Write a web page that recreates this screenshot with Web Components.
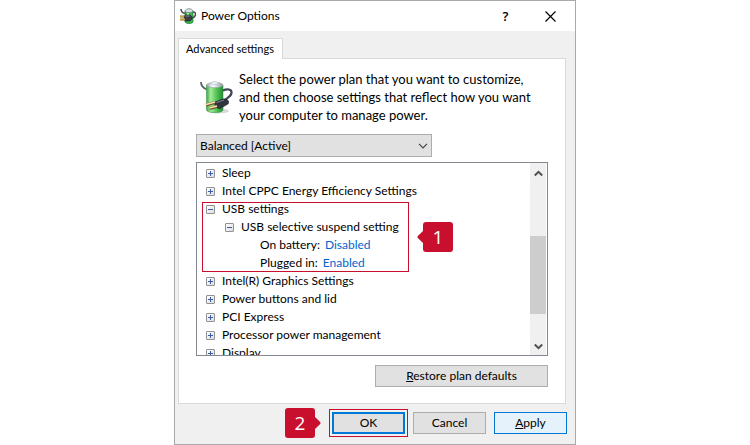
<!DOCTYPE html>
<html lang="en">
<head>
<meta charset="utf-8">
<title>Power Options</title>
<style>
    body {
        margin: 0;
        background-color: #FFF;
        color: #000;
        font: 12px/18px Lato, "Open Sans", sans-serif;
    }
</style>
</head>
<body>
<power-dialog></power-dialog>

<script>
// Battery with a plug
let BatteryIconTemplate = document.createElement("template");
BatteryIconTemplate.innerHTML = `
    <style>
        :host {
            display: block;
            flex: none;
            width: 34px;
            height: 36px;
        }

        svg {
            display: block;
            width: 100%;
            height: 100%;
        }
    </style>

    <svg viewBox="0 0 34 36" aria-hidden="true">
        <defs>
            <linearGradient id="body">
                <stop offset="0" stop-color="#3FA548"/>
                <stop offset=".25" stop-color="#A5EB9B"/>
                <stop offset=".55" stop-color="#5CCB5C"/>
                <stop offset="1" stop-color="#238C33"/>
            </linearGradient>
            <linearGradient id="cap">
                <stop offset="0" stop-color="#9BA5AC"/>
                <stop offset=".4" stop-color="#FFF"/>
                <stop offset="1" stop-color="#8B959B"/>
            </linearGradient>
        </defs>
        <ellipse cx="20" cy="32" rx="10" ry="2.500" fill="#000" opacity=".15"/>
        <path d="M2 3 C2 7 4 9 8 10.500" fill="none" stroke="#59616D" stroke-width="1.800"/>
        <path d="M7.500 6 V31 C8 34.500 23.500 34.500 24 31 V6 Z" fill="url(#body)" stroke="#3C9A48" stroke-width=".6"/>
        <path d="M7.500 6 C8 2.500 23.500 2.500 24 6 C23.500 9.500 8 9.500 7.500 6 Z" fill="url(#cap)" stroke="#98A2A8" stroke-width=".6"/>
        <path d="M12.500 4.500 C12.500 2 19 2 19 4.500 C19 6 12.500 6 12.500 4.500 Z" fill="#EDF3F8" stroke="#A5B0BA" stroke-width=".6"/>
        <path d="M24 11.500 C28 9.500 33 10 32.500 14 C32 18 27 19 25 22" fill="none" stroke="#3F4657" stroke-width="2.200"/>
        <path d="M16 23 L24 20 C28 19.500 31 22 29 25 L21 29.500 C17 30 15 26 16 23 Z" fill="#30343F" stroke="#1B1E28" stroke-width=".6"/>
        <path d="M17.500 23.500 L25 21" stroke="#7C8292" stroke-width="1"/>
        <path d="M7 26 L16 23.500 M10.500 29.500 L18 27.500" stroke="#74512C" stroke-width="3"/>
        <path d="M7 25.500 L16 23 M10.500 29 L18 27" stroke="#F6E2B2" stroke-width="1.600"/>
    </svg>`;

class BatteryIcon extends HTMLElement {
    constructor() {
        super();
        this.attachShadow({mode: "open"});
        this.shadowRoot.appendChild(BatteryIconTemplate.content.cloneNode(true));
    }
}
customElements.define("battery-icon", BatteryIcon);

// Small version for the title bar
let PlugIconTemplate = document.createElement("template");
PlugIconTemplate.innerHTML = `
    <style>
        :host {
            display: block;
            flex: none;
            width: 16px;
            height: 16px;
        }

        svg {
            display: block;
        }
    </style>

    <svg width="16" height="16" viewBox="0 0 16 16" aria-hidden="true">
        <path d="M5 3 V14 C6 16 12 16 13 14 V3 Z" fill="#38B648" stroke="#1E7D30" stroke-width=".7"/>
        <path d="M7 5 V10 H9 V5 Z" fill="#A9F0A4"/>
        <path d="M5 3 C6 0 12 0 13 3 C12 5 6 5 5 3 Z" fill="#DCE2E5" stroke="#777F84" stroke-width=".8"/>
        <path d="M1 1 C1 4 3 5 5 5.500 M13 4 C17 4 16 9 12 10" fill="none" stroke="#444B55" stroke-width="1.500"/>
        <path d="M5 7 L10 7 L12 9 V11 L10 13 H5 L4 10 Z" fill="#3A3D45" stroke="#1D1F25" stroke-width=".6"/>
        <path d="M5.500 8 H9.500" stroke="#8A8F99"/>
        <path d="M0 8.500 H4 M0 11.500 H5" stroke="#8A6A20" stroke-width="2"/>
        <path d="M0 8.200 H4 M0 11.200 H5" stroke="#E5C04B" stroke-width="1"/>
    </svg>`;

class PlugIcon extends HTMLElement {
    constructor() {
        super();
        this.attachShadow({mode: "open"});
        this.shadowRoot.appendChild(PlugIconTemplate.content.cloneNode(true));
    }
}
customElements.define("plug-icon", PlugIcon);

// Title Bar
let TitleBarTemplate = document.createElement("template");
TitleBarTemplate.innerHTML = `
    <style>
        :host {
            display: flex;
            align-items: center;
            height: 30px;
            padding: 0 2px 0 5px;
            background-color: #FFF;
        }

        h1 {
            flex: 1;
            margin: 0 0 0 5px;
            font-size: 12px;
            font-weight: normal;
        }

        button {
            width: 45px;
            height: 28px;
            padding: 0;
            border: none;
            background: none;
            font: 600 13px/18px "Open Sans", sans-serif;
            color: #000;
        }

        svg {
            display: block;
            margin: auto;
        }
    </style>

    <plug-icon></plug-icon>
    <h1><slot></slot></h1>
    <button type="button" aria-label="Help">?</button>
    <button type="button" aria-label="Close">
        <svg width="11" height="11" viewBox="0 0 11 11" aria-hidden="true">
            <path d="M.5 .5 L10.500 10.500 M10.500 .5 L.5 10.500" stroke="#000" stroke-width="1.200"/>
        </svg>
    </button>`;

class TitleBar extends HTMLElement {
    constructor() {
        super();
        this.attachShadow({mode: "open"});
        this.shadowRoot.appendChild(TitleBarTemplate.content.cloneNode(true));
    }
}
customElements.define("title-bar", TitleBar);

// Push buttons: kind is "default", "hot" or nothing
let PushButtonTemplate = document.createElement("template");
PushButtonTemplate.innerHTML = `
    <style>
        :host {
            display: block;
            min-width: 73px;
        }

        button {
            display: block;
            box-sizing: border-box;
            width: 100%;
            height: 22px;
            padding: 0;
            border: 1px solid #ADADAD;
            background-color: #E1E1E1;
            font: inherit;
            color: inherit;
        }

        :host([kind="default"]) button {
            border: 2px solid #0078D7;
        }

        :host([kind="hot"]) button {
            border-color: #0078D7;
            background-color: #E5F1FB;
        }
    </style>

    <button type="button"><slot></slot></button>`;

class PushButton extends HTMLElement {
    constructor() {
        super();
        this.attachShadow({mode: "open"});
        this.shadowRoot.appendChild(PushButtonTemplate.content.cloneNode(true));
    }
}
customElements.define("push-button", PushButton);

// Plan drop-down
let PlanSelectTemplate = document.createElement("template");
PlanSelectTemplate.innerHTML = `
    <style>
        :host {
            display: block;
            position: relative;
            max-width: 236px;
        }

        select {
            display: block;
            box-sizing: border-box;
            width: 100%;
            height: 23px;
            padding: 0 20px 0 3px;
            border: 1px solid #ADADAD;
            border-radius: 0;
            background-color: #E1E1E1;
            -webkit-appearance: none;
                    appearance: none;
            font: inherit;
            color: inherit;
        }

        svg {
            position: absolute;
            top: 9px;
            right: 4px;
            pointer-events: none;
        }
    </style>

    <select aria-label="Power plan">
        <option></option>
    </select>
    <svg width="10" height="6" viewBox="0 0 10 6" aria-hidden="true">
        <path d="M1 .8 L5 4.800 L9 .8" fill="none" stroke="#444" stroke-width="1.200"/>
    </svg>`;

class PlanSelect extends HTMLElement {
    constructor() {
        super();
        this.attachShadow({mode: "open"});
        this.shadowRoot.appendChild(PlanSelectTemplate.content.cloneNode(true));
        this.shadowRoot.querySelector("option").textContent = this.getAttribute("value");
    }
}
customElements.define("plan-select", PlanSelect);

// One tree row, its children go in the default slot
let TreeItemTemplate = document.createElement("template");
TreeItemTemplate.innerHTML = `
    <style>
        :host {
            display: block;
            position: relative;
        }

        .row {
            display: flex;
            align-items: center;
            gap: 7px;
            height: 18px;
            white-space: nowrap;
        }

        button {
            box-sizing: border-box;
            flex: none;
            width: 9px;
            height: 9px;
            margin-top: 1px;
            padding: 0;
            border: 1px solid #919191;
            border-radius: 1px;
            background:
                linear-gradient(#3B5AA8, #3B5AA8) center / 5px 1px no-repeat,
                linear-gradient(#3B5AA8, #3B5AA8) center / 1px 5px no-repeat,
                linear-gradient(135deg, #FFF, #DDD);
        }

        :host([open]) button {
            background:
                linear-gradient(#3B5AA8, #3B5AA8) center / 5px 1px no-repeat,
                linear-gradient(135deg, #FFF, #DDD);
        }

        .children {
            padding-left: 19px;
        }

        ::slotted(callout-frame) {
            position: absolute;
            inset: 2px auto 0 -4px;
        }
    </style>

    <div class="row">
        <button type="button"></button>
        <span></span>
    </div>
    <div class="children"><slot></slot></div>
    <slot name="frame"></slot>`;

class TreeItem extends HTMLElement {
    constructor() {
        super();
        this.attachShadow({mode: "open"});
        this.shadowRoot.appendChild(TreeItemTemplate.content.cloneNode(true));
        this.shadowRoot.querySelector("span").textContent = this.getAttribute("label");
        this.shadowRoot.querySelector("button").setAttribute("aria-label", this.hasAttribute("open") ? "Collapse" : "Expand");
    }
}
customElements.define("tree-item", TreeItem);

// Leaf row with a value link
let TreeValueTemplate = document.createElement("template");
TreeValueTemplate.innerHTML = `
    <style>
        :host {
            display: flex;
            gap: 5px;
            height: 18px;
            padding-left: 16px;
            white-space: nowrap;
        }

        a {
            color: #0066CC;
            text-decoration: none;
        }
    </style>

    <span></span>
    <a href="#"><slot></slot></a>`;

class TreeValue extends HTMLElement {
    constructor() {
        super();
        this.attachShadow({mode: "open"});
        this.shadowRoot.appendChild(TreeValueTemplate.content.cloneNode(true));
        this.shadowRoot.querySelector("span").textContent = this.getAttribute("label");
    }
}
customElements.define("tree-value", TreeValue);

// Numbered red marker, side tells where the frame's marker sits
let StepBadgeTemplate = document.createElement("template");
StepBadgeTemplate.innerHTML = `
    <style>
        :host {
            display: flex;
            align-items: center;
            pointer-events: none;
        }

        span {
            width: 30px;
            border-radius: 3px;
            background-color: #C8102E;
            color: #FFF;
            font: 19px/30px "Open Sans", sans-serif;
            text-align: center;
        }

        svg {
            flex: none;
        }

        :host([side="left"]) {
            flex-direction: row-reverse;
        }

        :host([side="left"]) svg {
            transform: scaleX(-1);
        }
    </style>

    <svg width="6" height="12" viewBox="0 0 6 12" aria-hidden="true">
        <path d="M6 0 L.8 5 Q0 6 .8 7 L6 12 Z" fill="#C8102E"/>
    </svg>
    <span><slot></slot></span>`;

class StepBadge extends HTMLElement {
    constructor() {
        super();
        this.attachShadow({mode: "open"});
        this.shadowRoot.appendChild(StepBadgeTemplate.content.cloneNode(true));
    }
}
customElements.define("step-badge", StepBadge);

// Red outline with its marker next to it
let CalloutFrameTemplate = document.createElement("template");
CalloutFrameTemplate.innerHTML = `
    <style>
        :host {
            display: block;
            box-sizing: border-box;
            width: 207px;
            border: 1px solid #C8102E;
            pointer-events: none;
        }

        :host([side="left"]) {
            width: auto;
        }

        step-badge {
            position: absolute;
            top: 50%;
            left: calc(100% + 9px);
            transform: translateY(-50%);
        }

        :host([side="left"]) step-badge {
            left: auto;
            right: calc(100% + 9px);
        }
    </style>

    <step-badge><slot></slot></step-badge>`;

class CalloutFrame extends HTMLElement {
    constructor() {
        super();
        this.attachShadow({mode: "open"});
        this.shadowRoot.appendChild(CalloutFrameTemplate.content.cloneNode(true));
        this.shadowRoot.querySelector("step-badge").setAttribute("side", this.getAttribute("side"));
    }
}
customElements.define("callout-frame", CalloutFrame);

// Scrolling tree box
let TreeBoxTemplate = document.createElement("template");
TreeBoxTemplate.innerHTML = `
    <style>
        :host {
            display: flex;
            box-sizing: border-box;
            height: 194px;
            border: 1px solid #828790;
            background-color: #FFF;
        }

        .items {
            flex: 1;
            overflow: hidden;
            padding: 1px 0 0 9px;
        }

        .bar {
            display: flex;
            flex-direction: column;
            justify-content: space-between;
            align-items: center;
            width: 16px;
            margin-right: 1px;
            background-color: #F0F0F0;
        }

        .bar svg {
            flex: none;
            padding: 7px 0 5px;
        }

        .track {
            flex: 1;
            display: grid;
            grid-template-rows: 54fr 78fr 22fr;
            width: 100%;
        }

        .thumb {
            grid-row: 2;
            background-color: #CDCDCD;
        }
    </style>

    <div class="items"><slot></slot></div>
    <div class="bar">
        <svg width="9" height="7" viewBox="0 0 9 7" aria-hidden="true">
            <path d="M.8 5.500 L4.500 1.800 L8.200 5.500" fill="none" stroke="#505050" stroke-width="2"/>
        </svg>
        <div class="track"><div class="thumb"></div></div>
        <svg width="9" height="7" viewBox="0 0 9 7" aria-hidden="true">
            <path d="M.8 1.500 L4.500 5.200 L8.200 1.500" fill="none" stroke="#505050" stroke-width="2"/>
        </svg>
    </div>`;

class TreeBox extends HTMLElement {
    constructor() {
        super();
        this.attachShadow({mode: "open"});
        this.shadowRoot.appendChild(TreeBoxTemplate.content.cloneNode(true));
    }
}
customElements.define("tree-box", TreeBox);

// Tab with its page
let TabPanelTemplate = document.createElement("template");
TabPanelTemplate.innerHTML = `
    <style>
        :host {
            display: block;
        }

        button {
            display: block;
            position: relative;
            box-sizing: border-box;
            height: 21px;
            margin-bottom: -1px;
            padding: 0 8px 0 7px;
            border: 1px solid #D9D9D9;
            border-bottom: none;
            background-color: #FFF;
            font: inherit;
            font-size: 11px;
            color: inherit;
        }

        .page {
            display: flex;
            flex-direction: column;
            padding: 11px 17px 16px;
            border: 1px solid #D9D9D9;
            background-color: #FFF;
        }
    </style>

    <button type="button" role="tab" aria-selected="true"></button>
    <div class="page"><slot></slot></div>`;

class TabPanel extends HTMLElement {
    constructor() {
        super();
        this.attachShadow({mode: "open"});
        this.shadowRoot.appendChild(TabPanelTemplate.content.cloneNode(true));
        this.shadowRoot.querySelector("button").textContent = this.getAttribute("label");
    }
}
customElements.define("tab-panel", TabPanel);

// The whole dialog
let PowerDialogTemplate = document.createElement("template");
PowerDialogTemplate.innerHTML = `
    <style>
        :host {
            display: block;
            box-sizing: border-box;
            max-width: 402px;
            margin: 0 auto;
            border: 1px solid #A9A9A9;
            background-color: #F0F0F0;
        }

        tab-panel {
            margin: 7px 9px 0 3px;
        }

        .intro {
            display: flex;
            align-items: center;
            gap: 6px;
            padding-left: 3px;
        }

        .intro p {
            margin: 0;
            font-size: 13px;
        }

        plan-select {
            margin: 10px 0 5px;
            width: 100%;
        }

        .restore {
            align-self: flex-end;
            width: 173px;
            margin-top: 9px;
        }

        footer {
            display: flex;
            justify-content: flex-end;
            gap: 8px;
            padding: 8px 8px 10px;
        }

        .ok {
            position: relative;
        }

        .ok callout-frame {
            position: absolute;
            inset: -3px;
        }
    </style>

    <title-bar>Power Options</title-bar>
    <tab-panel label="Advanced settings">
        <div class="intro">
            <battery-icon></battery-icon>
            <p>Select the power plan that you want to customize,<br>and then choose settings that reflect how you want<br>your computer to manage power.</p>
        </div>
        <plan-select value="Balanced [Active]"></plan-select>
        <tree-box>
            <tree-item label="Sleep"></tree-item>
            <tree-item label="Intel CPPC Energy Efficiency Settings"></tree-item>
            <tree-item label="USB settings" open>
                <tree-item label="USB selective suspend setting" open>
                    <tree-value label="On battery:">Disabled</tree-value>
                    <tree-value label="Plugged in:">Enabled</tree-value>
                </tree-item>
                <callout-frame slot="frame" side="right">1</callout-frame>
            </tree-item>
            <tree-item label="Intel(R) Graphics Settings"></tree-item>
            <tree-item label="Power buttons and lid"></tree-item>
            <tree-item label="PCI Express"></tree-item>
            <tree-item label="Processor power management"></tree-item>
            <tree-item label="Display"></tree-item>
        </tree-box>
        <push-button class="restore"><u>R</u>estore plan defaults</push-button>
    </tab-panel>
    <footer>
        <div class="ok">
            <push-button kind="default">OK</push-button>
            <callout-frame side="left">2</callout-frame>
        </div>
        <push-button>Cancel</push-button>
        <push-button kind="hot"><u>A</u>pply</push-button>
    </footer>`;

class PowerDialog extends HTMLElement {
    constructor() {
        super();
        this.attachShadow({mode: "open"});
        this.shadowRoot.appendChild(PowerDialogTemplate.content.cloneNode(true));
    }
}
customElements.define("power-dialog", PowerDialog);
</script>
</body>
</html>
